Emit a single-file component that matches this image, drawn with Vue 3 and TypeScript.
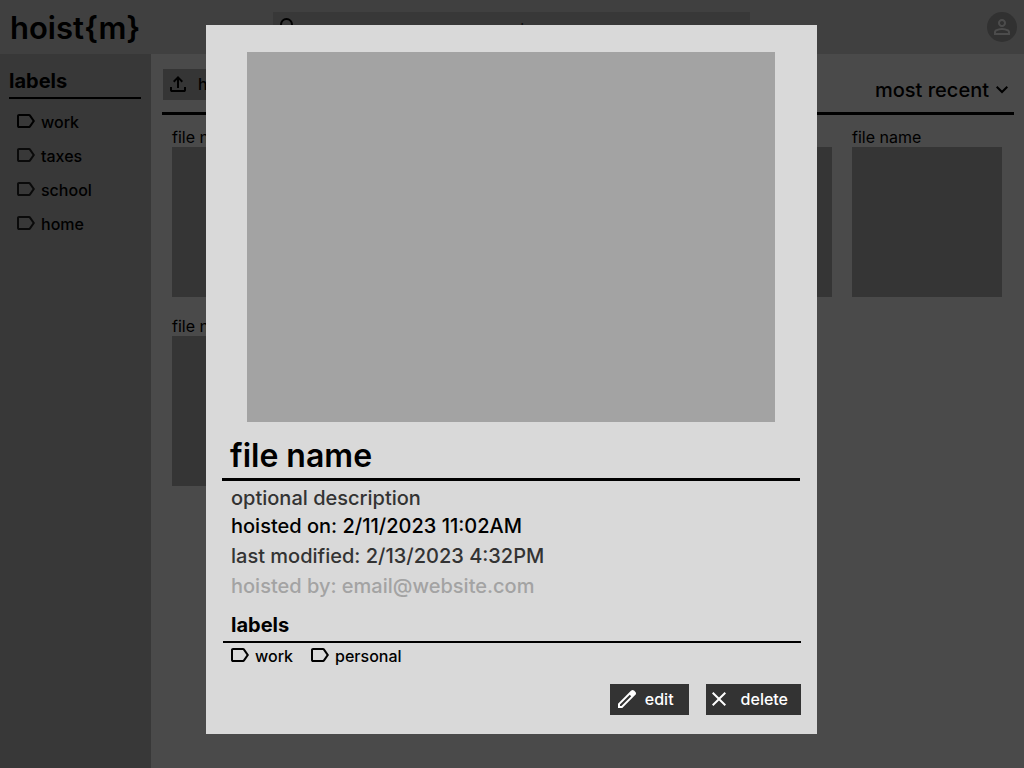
<script setup lang="ts">
import { ref } from 'vue'

interface StoredFile {
  id: number
  name: string
}

const labelIcon =
  'M21 12l-4.35 6.15q-.275.4-.712.625T15 19H5q-.825 0-1.412-.587T3 17V7q0-.825.588-1.412T5 5h10q.5 0 .938.225t.712.625zm-2.45 0L15 7H5v10h10z'

const labels: string[] = ['work', 'taxes', 'school', 'home']
const fileLabels: string[] = ['work', 'personal']
const files: StoredFile[] = Array.from({ length: 6 }, (_, i) => ({ id: i + 1, name: 'file name' }))

const query = ref('')
const sort = ref('recent')
</script>

<template>
  <div class="app">
    <header class="topbar">
      <h1 class="logo">hoist{m}</h1>
      <div class="search">
        <svg class="icon" viewBox="0 0 24 24" aria-hidden="true">
          <path d="M19.6 21l-6.3-6.3q-.75.6-1.725.95T9.5 16q-2.725 0-4.612-1.887T3 9.5t1.888-4.612T9.5 3t4.613 1.888T16 9.5q0 1.1-.35 2.075T14.7 13.3l6.3 6.3zM9.5 14q1.875 0 3.188-1.312T14 9.5t-1.312-3.187T9.5 5 6.313 6.313 5 9.5t1.313 3.188T9.5 14" />
        </svg>
        <input v-model="query" type="search" aria-label="search" placeholder="search" />
      </div>
      <button class="avatar" type="button" aria-label="account">
        <svg class="icon" viewBox="0 0 24 24" aria-hidden="true">
          <path d="M12 12q-1.65 0-2.825-1.175T8 8t1.175-2.825T12 4t2.825 1.175T16 8t-1.175 2.825T12 12m-8 8v-2.8q0-.85.438-1.562T5.6 14.55q1.55-.775 3.15-1.162T12 13t3.25.388 3.15 1.162q.725.375 1.163 1.088T20 17.2V20zm2-2h12v-.8q0-.275-.137-.5t-.363-.35q-1.35-.675-2.725-1.012T12 15t-2.775.338T6.5 16.35q-.225.125-.363.35T6 17.2zm6-8q.825 0 1.413-.587T14 8t-.587-1.412T12 6t-1.412.588T10 8t.588 1.413T12 10" />
        </svg>
      </button>
    </header>

    <div class="body">
      <nav class="sidebar">
        <h2 class="section-title">labels</h2>
        <ul class="label-list">
          <li v-for="label in labels" :key="label">
            <a class="label" href="#">
              <svg class="icon" viewBox="0 0 24 24" aria-hidden="true"><path :d="labelIcon" /></svg>
              {{ label }}
            </a>
          </li>
        </ul>
      </nav>

      <main class="content">
        <div class="toolbar">
          <button class="button upload" type="button">
            <svg class="icon" viewBox="0 0 24 24" aria-hidden="true">
              <path d="M11 16V7.85l-2.6 2.6L7 9l5-5 5 5-1.4 1.45-2.6-2.6V16zm-5 4q-.825 0-1.412-.587T4 18v-3h2v3h12v-3h2v3q0 .825-.587 1.413T18 20z" />
            </svg>
            hoist
          </button>
          <div class="sort">
            <select v-model="sort" aria-label="sort files">
              <option value="recent">most recent</option>
            </select>
            <svg class="icon" viewBox="0 0 24 24" aria-hidden="true">
              <path d="M12 15.4l-6-6L7.4 8l4.6 4.6L16.6 8 18 9.4z" />
            </svg>
          </div>
        </div>
        <div class="files">
          <figure v-for="file in files" :key="file.id" class="file">
            <figcaption>{{ file.name }}</figcaption>
            <div class="thumb"></div>
          </figure>
        </div>
      </main>
    </div>

    <div class="overlay">
      <section class="modal" role="dialog" aria-modal="true" aria-labelledby="file-title">
        <div class="preview"></div>
        <h2 id="file-title" class="file-title">file name</h2>
        <div class="details">
          <p class="description">optional description</p>
          <p class="hoisted">hoisted on: 2/11/2023 11:02AM</p>
          <p class="modified">last modified: 2/13/2023 4:32PM</p>
          <p class="owner">hoisted by: email@website.com</p>
        </div>
        <h3 class="section-title file-labels-title">labels</h3>
        <ul class="file-labels">
          <li v-for="label in fileLabels" :key="label" class="label">
            <svg class="icon" viewBox="0 0 24 24" aria-hidden="true"><path :d="labelIcon" /></svg>
            {{ label }}
          </li>
        </ul>
        <div class="actions">
          <button class="button edit" type="button">
            <svg class="icon" viewBox="0 0 24 24" aria-hidden="true">
              <path d="M5 19h1.425L16.2 9.225 14.775 7.8 5 17.575zm-2 2v-4.25L16.2 3.575q.3-.275.663-.425T17.625 3t.775.15.65.45L20.425 5q.3.275.438.65T21 6.4q0 .4-.137.763t-.438.662L7.25 21z" />
            </svg>
            edit
          </button>
          <button class="button delete" type="button">
            <svg class="icon" viewBox="0 0 24 24" aria-hidden="true">
              <path d="M6.4 19L5 17.6l5.6-5.6L5 6.4 6.4 5l5.6 5.6L17.6 5 19 6.4 13.4 12l5.6 5.6-1.4 1.4-5.6-5.6z" />
            </svg>
            delete
          </button>
        </div>
      </section>
    </div>
  </div>
</template>

<style>
body {
  background: #4a4a4a;
}
</style>

<style scoped>
* {
  box-sizing: border-box;
}

.app {
  display: flex;
  flex-direction: column;
  min-height: 100vh;
  background: #f7f7f7;
  color: #000;
  font-family: Inter, "Liberation Sans", sans-serif;
  font-size: 16px;
  line-height: 20px;
}

h1,
h2,
h3,
p,
ul,
figure {
  margin: 0;
  padding: 0;
}

ul {
  list-style: none;
}

button,
input,
select {
  border: 0;
  margin: 0;
  border-radius: 0;
  color: inherit;
  font: inherit;
}

.icon {
  flex: none;
  width: 24px;
  height: 24px;
  fill: currentColor;
}

.topbar {
  display: grid;
  grid-template-columns: 1fr minmax(0, 477px) 1fr;
  align-items: center;
  height: 54px;
  padding: 0 7px 0 6px;
  background: #d5d5d5;
}

.logo {
  padding: 2px 0 0 4px;
  font-size: 31px;
  font-weight: 600;
  line-height: 40px;
}

.search {
  display: flex;
  align-items: center;
  height: 31px;
  padding: 0 28px 0 4px;
  background: #bbb;
}

.search input {
  flex: 1;
  min-width: 0;
  padding: 4px 0 0;
  background: none;
  text-align: center;
}

.search input::placeholder {
  color: #333;
  opacity: 1;
}

.avatar {
  display: grid;
  place-items: center;
  justify-self: end;
  width: 30px;
  height: 30px;
  padding: 0;
  border-radius: 50%;
  background: #a3a3a3;
  color: #fff;
}

.body {
  display: flex;
  flex: 1;
}

.sidebar {
  flex: none;
  width: 151px;
  padding: 14px 10px 0 9px;
  background: #bbb;
}

.section-title {
  border-bottom: 2px solid #000;
  font-size: 20px;
  font-weight: 700;
  line-height: 24px;
}

.sidebar .section-title {
  padding: 1px 0 4px;
}

.label {
  display: flex;
  align-items: flex-start;
  gap: 3px;
  color: inherit;
  font-weight: 500;
  line-height: 26px;
  text-decoration: none;
}

.label-list {
  display: grid;
  gap: 8px;
  padding: 10px 0 0 5px;
}

.label-list .icon {
  color: #222;
}

.label-list li:first-child .icon {
  color: #000;
}

.content {
  flex: 1;
  min-width: 0;
  padding: 15px 10px 0 11px;
}

.toolbar {
  display: flex;
  justify-content: space-between;
  align-items: flex-start;
  padding: 0 0 10px 1px;
  border-bottom: 3px solid #000;
}

.button {
  display: flex;
  align-items: center;
  height: 31px;
  font-weight: 500;
}

.upload {
  gap: 8px;
  padding: 0 12px 1px 3px;
  background: #b1b1b1;
}

.sort {
  position: relative;
  display: flex;
  align-items: center;
  padding-top: 9px;
}

.sort select {
  appearance: none;
  padding: 0 25px 0 0;
  background: none;
  font-size: 20px;
  font-weight: 500;
  line-height: 24px;
}

.sort .icon {
  position: absolute;
  right: 0;
  pointer-events: none;
}

.files {
  display: grid;
  grid-template-columns: repeat(auto-fill, 150px);
  gap: 19px 20px;
  padding: 12px 0 0 10px;
}

.thumb {
  height: 150px;
  background: #b1b1b1;
}

.overlay {
  position: fixed;
  inset: 0;
  display: flex;
  justify-content: center;
  align-items: flex-start;
  overflow: auto;
  padding: 25px 25px 25px 24px;
  background: rgba(0, 0, 0, 0.7);
}

.modal {
  width: 100%;
  max-width: 611px;
  padding: 27px 16px 19px;
  background: #d9d9d9;
}

.preview {
  height: 370px;
  margin: 0 26px 0 25px;
  background: #a3a3a3;
}

.file-title {
  margin-right: 1px;
  padding: 14px 8px 2px;
  border-bottom: 3px solid #000;
  font-size: 32px;
  font-weight: 600;
  line-height: 40px;
}

.details {
  padding: 4px 9px 0;
  font-size: 20px;
  font-weight: 500;
  line-height: 30px;
}

.description {
  line-height: 26px;
}

.description,
.modified {
  color: #333;
}

.owner {
  color: #a3a3a3;
}

.file-labels-title {
  margin-left: 1px;
  padding: 12px 8px 4px;
}

.file-labels {
  display: flex;
  flex-wrap: wrap;
  gap: 15px;
  padding: 0 6px;
}

.actions {
  display: flex;
  justify-content: flex-end;
  gap: 17px;
  padding-top: 15px;
}

.actions .button {
  background: #333;
  color: #fff;
}

.edit {
  gap: 6px;
  padding: 0 15px 1px 5px;
}

.delete {
  gap: 10px;
  padding: 0 13px 1px 1px;
}
</style>
